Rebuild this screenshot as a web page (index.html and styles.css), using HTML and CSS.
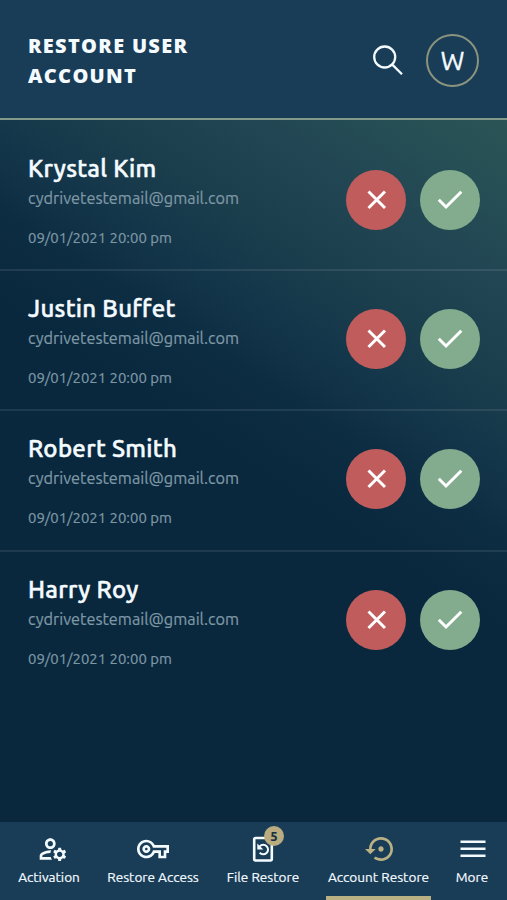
FILE: index.html
```html
<!DOCTYPE html>
<html lang="en">
<head>
<meta charset="utf-8">
<title>Restore User Account</title>
<link rel="stylesheet" href="styles.css">
</head>
<body>
<svg class="defs" aria-hidden="true">
  <symbol id="close" viewBox="0 0 60 60"><path d="M22.500 21.500L39 38M39 21.500L22.500 38" fill="none" stroke="#fff" stroke-width="3"/></symbol>
  <symbol id="check" viewBox="0 0 60 60"><path d="M18.800 29.800L26 37L41.300 21.700" fill="none" stroke="#fff" stroke-width="3"/></symbol>
</svg>
<div class="app">
  <header class="header">
    <h1 class="title">RESTORE USER<br>ACCOUNT</h1>
    <svg class="search" viewBox="0 0 32 32"><circle cx="12.700" cy="13" r="10.500"/><path d="M20.300 20.600L30 30.200"/></svg>
    <div class="avatar">W</div>
  </header>
  <main class="list">
    <section class="row">
      <div class="info"><h2 class="name">Krystal Kim</h2><p class="email">cydrivetestemail@gmail.com</p><p class="date">09/01/2021 20:00 pm</p></div>
      <button class="action reject"><svg><use href="#close"/></svg></button><button class="action accept"><svg><use href="#check"/></svg></button>
    </section>
    <section class="row">
      <div class="info"><h2 class="name">Justin Buffet</h2><p class="email">cydrivetestemail@gmail.com</p><p class="date">09/01/2021 20:00 pm</p></div>
      <button class="action reject"><svg><use href="#close"/></svg></button><button class="action accept"><svg><use href="#check"/></svg></button>
    </section>
    <section class="row">
      <div class="info"><h2 class="name">Robert Smith</h2><p class="email">cydrivetestemail@gmail.com</p><p class="date">09/01/2021 20:00 pm</p></div>
      <button class="action reject"><svg><use href="#close"/></svg></button><button class="action accept"><svg><use href="#check"/></svg></button>
    </section>
    <section class="row">
      <div class="info"><h2 class="name">Harry Roy</h2><p class="email">cydrivetestemail@gmail.com</p><p class="date">09/01/2021 20:00 pm</p></div>
      <button class="action reject"><svg><use href="#close"/></svg></button><button class="action accept"><svg><use href="#check"/></svg></button>
    </section>
  </main>
  <nav class="nav">
    <a class="tab">
      <svg class="icon shift" viewBox="0 0 24 24"><path d="M4 18v-.65c0-.34.16-.66.41-.81C6.100 15.530 8.030 15 10 15c.03 0 .05 0 .08.01.1-.7.3-1.370.59-1.980-.22-.02-.44-.03-.67-.03-2.420 0-4.680.67-6.610 1.820-.88.52-1.390 1.500-1.390 2.530V20h9.260c-.42-.6-.75-1.280-.97-2H4zM10 12c2.210 0 4-1.790 4-4s-1.790-4-4-4-4 1.790-4 4 1.790 4 4 4zm0-6c1.100 0 2 .9 2 2s-.9 2-2 2-2-.9-2-2 .9-2 2-2zM20.750 16c0-.22-.03-.42-.06-.63l1.140-1.010-1-1.730-1.450.49c-.32-.27-.68-.48-1.080-.63L18 11h-2l-.3 1.490c-.4.15-.76.36-1.080.63l-1.450-.49-1 1.730 1.140 1.010c-.03.21-.06.41-.06.63s.03.42.06.63l-1.140 1.010 1 1.730 1.450-.49c.32.27.68.48 1.080.63L16 21h2l.3-1.490c.4-.15.76-.36 1.080-.63l1.450.49 1-1.730-1.140-1.010c.03-.21.06-.41.06-.63zM17 18c-1.100 0-2-.9-2-2s.9-2 2-2 2 .9 2 2-.9 2-2 2z"/></svg>
      <span>Activation</span>
    </a>
    <a class="tab">
      <svg class="icon" viewBox="0 0 24 24"><path d="M22 19h-6v-4h-2.680c-1.140 2.420-3.600 4-6.320 4-3.860 0-7-3.140-7-7s3.140-7 7-7c2.720 0 5.170 1.580 6.320 4H24v6h-2v4zm-4-2h2v-4h2v-2H11.940l-.23-.67C11.010 8.340 9.110 7 7 7c-2.760 0-5 2.240-5 5s2.240 5 5 5c2.110 0 4.010-1.340 4.710-3.330l.23-.67H18v4zM7 15c-1.650 0-3-1.350-3-3s1.350-3 3-3 3 1.350 3 3-1.350 3-3 3zm0-4c-.55 0-1 .45-1 1s.45 1 1 1 1-.45 1-1-.45-1-1-1z"/></svg>
      <span>Restore Access</span>
    </a>
    <a class="tab">
      <span class="holder"><svg class="icon" viewBox="0 0 32 32"><rect class="line" x="7.200" y="5" width="17.600" height="22.500" rx="1.500"/><path class="line thin" d="M12.800 13.200A4.800 4.800 0 1 1 12.700 19.800"/><path d="M10.300 10.500v6h6z"/></svg><b class="badge">5</b></span>
      <span>File Restore</span>
    </a>
    <a class="tab active">
      <svg class="icon gold" viewBox="0 0 24 24"><path d="M14 12c0-1.100-.9-2-2-2s-2 .9-2 2 .9 2 2 2 2-.9 2-2zm-2-9c-4.970 0-9 4.030-9 9H0l4 4 4-4H5c0-3.870 3.130-7 7-7s7 3.130 7 7-3.130 7-7 7c-1.510 0-2.910-.49-4.060-1.300l-1.420 1.440C8.040 20.300 9.940 21 12 21c4.970 0 9-4.030 9-9s-4.030-9-9-9z"/></svg>
      <span>Account Restore</span>
    </a>
    <a class="tab">
      <svg class="icon menu" viewBox="0 0 32 32"><path d="M3.500 7.500h25v2.600h-25zM3.500 14.500h25v2.600h-25zM3.500 21.500h25v2.600h-25z"/></svg>
      <span>More</span>
    </a>
  </nav>
</div>
</body>
</html>
```
FILE: styles.css
```css
* { box-sizing: border-box; }
body { margin: 0; }
.defs { position: absolute; width: 0; height: 0; }
.app {
  display: flex;
  flex-direction: column;
  height: 900px;
  overflow: hidden;
  color: #f4fbff;
  font-family: Ubuntu, "Noto Sans", sans-serif;
  background: #09283e;
}
.header {
  display: flex;
  align-items: center;
  flex: none;
  height: 120px;
  padding: 3px 28px 0;
  border-bottom: 2px solid #83998a;
  background: #193c57;
}
.title {
  flex: 1;
  margin: 0;
  font: 800 20px/30px "Open Sans", sans-serif;
  letter-spacing: 1.3px;
}
.search { width: 32px; height: 32px; margin: 0 22px 1px 0; fill: none; stroke: #f4fbff; stroke-width: 2.3; }
.avatar {
  width: 53px;
  height: 53px;
  border: 2px solid #8a937d;
  border-radius: 50%;
  font-size: 25.500px;
  line-height: 50px;
  text-align: center;
  -webkit-text-stroke: 0.4px;
}
.list {
  flex: 1;
  background: linear-gradient(213deg, #2b5456 0, #254d55 80px, #214553 150px, #1b3e4d 225px, #14364a 290px, #0d2d43 350px, #09283e 430px);
}
.row {
  display: flex;
  align-items: center;
  height: 140.300px;
  padding: 4px 27px 0 28px;
  border-top: 2px solid #ffffff16;
}
.row:first-child { height: 149px; padding-top: 14px; border: 0; }
.info { flex: 1; white-space: nowrap; }
.name {
  margin: 0;
  font-size: 24px;
  line-height: 30px;
  font-weight: 500;
  letter-spacing: 0.3px;
  -webkit-text-stroke: 0.5px;
}
.email, .date { margin: 0; color: #7f98a5; -webkit-text-stroke: 0.2px; }
.email { font-size: 16.300px; line-height: 28px; }
.date { margin-top: 14px; font-size: 14.900px; line-height: 24px; }
.action { width: 60px; height: 60px; margin: 0 0 6px 14px; padding: 0; border: 0; border-radius: 50%; }
.row:first-child .action { margin-bottom: 4px; }
.action svg { display: block; width: 60px; height: 60px; }
.reject { background: #c15c5d; }
.accept { background: #82ac8d; }
.nav {
  display: grid;
  grid-template-columns: 98px 110px 110px 121px 66px;
  flex: none;
  height: 78px;
  background: #193c57;
}
.tab {
  display: flex;
  flex-direction: column;
  align-items: center;
  padding-top: 11px;
  font-size: 13.600px;
  line-height: 24px;
  white-space: nowrap;
  -webkit-text-stroke: 0.2px;
}
.icon { display: block; width: 32px; height: 32px; fill: #f4fbff; }
.shift { margin-left: 7px; }
.menu { margin-left: 2px; }
.gold { margin-left: 4px; fill: #b9b184; }
.holder { position: relative; }
.line { fill: none; stroke: #f4fbff; stroke-width: 2.6; }
.thin { stroke-width: 2; }
.badge {
  position: absolute;
  left: 17px;
  top: -7px;
  width: 20px;
  height: 20px;
  border-radius: 50%;
  background: #b9ac80;
  color: #17303f;
  font-size: 13px;
  line-height: 20px;
  text-align: center;
}
.active { border-bottom: 4px solid #b9b184; margin: 0 8px; }
```
